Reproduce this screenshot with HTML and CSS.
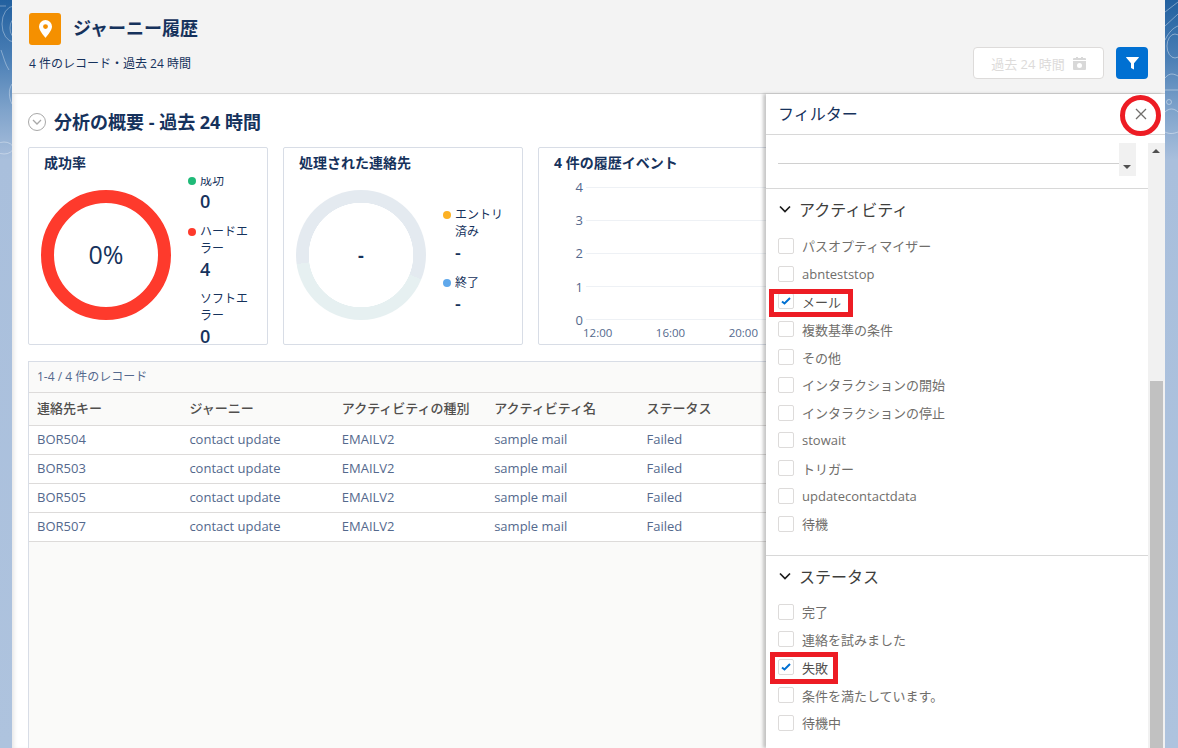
FILE: index.html
```html
<!DOCTYPE html>
<html lang="ja">
<head>
  <meta charset="UTF-8">
  <meta name="viewport" content="width=device-width, initial-scale=1.0">
  <title>ジャーニー履歴</title>
  <link rel="stylesheet" href="styles.css">
</head>
<body>
  <svg class="wall wall-left" width="12" height="170" viewBox="0 0 12 170" fill="none" stroke="#fff" stroke-opacity="0.35">
    <ellipse cx="14" cy="24" rx="12" ry="18"/>
    <ellipse cx="16" cy="28" rx="6" ry="10"/>
    <path d="M1 50c3 8 4 14 8 20M0 6h6M12 84c-4 6-3 14 0 20"/>
    <ellipse cx="4" cy="148" rx="9" ry="6"/>
  </svg>
  <svg class="wall wall-right" width="13" height="170" viewBox="0 0 13 170" fill="none" stroke="#fff" stroke-opacity="0.4">
    <path d="M0 12L13 2M0 26L13 14M0 40c4-8 8-12 13-14"/>
    <ellipse cx="10" cy="46" rx="8" ry="12"/>
    <path d="M0 78c5-6 9-4 13-2M0 90h13M0 112c4-4 9-4 13 0M0 132c4 2 8 2 13 0"/>
    <circle cx="4" cy="102" r="2.500"/>
  </svg>
  <div class="app">
    <header class="page-head">
      <div class="head-left">
        <div class="title-row">
          <span class="app-icon">
            <svg width="13" height="20" viewBox="0 0 16 22"><path fill="#fff" fill-rule="evenodd" d="M8 0a8 8 0 0 0-8 8c0 5 5.500 10.500 7.300 13.300a.8.800 0 0 0 1.400 0C10.500 18.500 16 13 16 8a8 8 0 0 0-8-8zm0 5a3 3 0 1 1 0 6 3 3 0 0 1 0-6z"/></svg>
          </span>
          <h1>ジャーニー履歴</h1>
        </div>
        <div class="subtitle">4 件のレコード・過去 24 時間</div>
      </div>
      <div class="head-actions">
        <button class="range-btn">過去 24 時間
          <svg width="13" height="13" viewBox="0 0 13 13"><path fill="#d8d8d8" fill-rule="evenodd" d="M0 4h13v8a1 1 0 0 1-1 1H1a1 1 0 0 1-1-1zm6.500 2a2.500 2.500 0 1 0 0 5 2.500 2.500 0 0 0 0-5zM1 1h2V0h2v1h3V0h2v1h2a1 1 0 0 1 1 1v1H0V2a1 1 0 0 1 1-1z"/></svg>
        </button>
        <button class="filter-btn">
          <svg width="13" height="13" viewBox="0 0 13 13"><path fill="#fff" d="M.4 0h12.200c.3 0 .5.400.3.600L8 6.200v6.300L5 11V6.200L.1.600C-.1.400.1 0 .4 0z"/></svg>
        </button>
      </div>
    </header>

    <div class="body">
      <main class="content">
        <div class="section-title">
          <span class="collapse-circle">
            <svg width="10" height="6" viewBox="0 0 10 6"><path fill="none" stroke="#a8a8a8" stroke-width="1.300" d="M1 1l4 4 4-4"/></svg>
          </span>
          <h2>分析の概要 - 過去 24 時間</h2>
        </div>

        <div class="cards">
          <section class="card">
            <h3>成功率</h3>
            <div class="card-body">
              <div class="donut donut-red"><span class="donut-pct">0%</span></div>
              <div class="legend legend-scroll">
                <div class="legend-item first-item">
                  <div class="legend-label"><i class="dot green"></i>成功</div>
                  <div class="legend-value">0</div>
                </div>
                <div class="legend-item">
                  <div class="legend-label"><i class="dot red"></i>ハードエラー</div>
                  <div class="legend-value">4</div>
                </div>
                <div class="legend-item">
                  <div class="legend-label">ソフトエラー</div>
                  <div class="legend-value">0</div>
                </div>
              </div>
            </div>
          </section>

          <section class="card">
            <h3>処理された連絡先</h3>
            <div class="card-body">
              <div class="donut donut-empty"><span class="donut-dash">-</span></div>
              <div class="legend legend-centered">
                <div class="legend-item">
                  <div class="legend-label"><i class="dot orange"></i>エントリ済み</div>
                  <div class="legend-value">-</div>
                </div>
                <div class="legend-item">
                  <div class="legend-label"><i class="dot blue"></i>終了</div>
                  <div class="legend-value">-</div>
                </div>
              </div>
            </div>
          </section>

          <section class="card card-chart">
            <h3>4 件の履歴イベント</h3>
            <div class="chart">
              <div class="chart-row"><span>4</span><i></i></div>
              <div class="chart-row"><span>3</span><i></i></div>
              <div class="chart-row"><span>2</span><i></i></div>
              <div class="chart-row"><span>1</span><i></i></div>
              <div class="chart-row"><span>0</span><i></i></div>
              <div class="chart-times"><span>12:00</span><span>16:00</span><span>20:00</span></div>
            </div>
          </section>
        </div>

        <div class="records">
          <div class="records-count">1-4 / 4 件のレコード</div>
          <table>
            <thead>
              <tr><th>連絡先キー</th><th>ジャーニー</th><th>アクティビティの種別</th><th>アクティビティ名</th><th>ステータス</th></tr>
            </thead>
            <tbody>
              <tr><td>BOR504</td><td>contact update</td><td>EMAILV2</td><td>sample mail</td><td>Failed</td></tr>
              <tr><td>BOR503</td><td>contact update</td><td>EMAILV2</td><td>sample mail</td><td>Failed</td></tr>
              <tr><td>BOR505</td><td>contact update</td><td>EMAILV2</td><td>sample mail</td><td>Failed</td></tr>
              <tr><td>BOR507</td><td>contact update</td><td>EMAILV2</td><td>sample mail</td><td>Failed</td></tr>
            </tbody>
          </table>
        </div>
      </main>

      <aside class="filter-panel">
        <div class="filter-head">
          <span class="filter-name">フィルター</span>
          <svg class="close-x" width="12" height="12" viewBox="0 0 12 12"><path stroke="#706e6b" stroke-width="1.300" d="M1 1l10 10M11 1L1 11"/></svg>
          <span class="close-ring"></span>
        </div>
        <div class="filter-scroll">
          <div class="filter-inner">
            <div class="picker">
              <div class="picker-line"></div>
              <div class="picker-spin"><i class="tri-down"></i></div>
            </div>

            <div class="group group-first">
              <div class="group-title">
                <svg width="12" height="8" viewBox="0 0 12 8"><path fill="none" stroke="#1b1b1b" stroke-width="1.700" d="M1 1.500l5 5 5-5"/></svg>
                アクティビティ
              </div>
              <label class="check"><i class="box"></i>パスオプティマイザー</label>
              <label class="check"><i class="box"></i>abnteststop</label>
              <label class="check on mark-mail"><i class="box"><svg width="10" height="8" viewBox="0 0 10 8"><path fill="none" stroke="#0070d2" stroke-width="2" d="M1 4.500l2.500 2L9 1"/></svg></i>メール</label>
              <label class="check"><i class="box"></i>複数基準の条件</label>
              <label class="check"><i class="box"></i>その他</label>
              <label class="check"><i class="box"></i>インタラクションの開始</label>
              <label class="check"><i class="box"></i>インタラクションの停止</label>
              <label class="check"><i class="box"></i>stowait</label>
              <label class="check"><i class="box"></i>トリガー</label>
              <label class="check"><i class="box"></i>updatecontactdata</label>
              <label class="check"><i class="box"></i>待機</label>
            </div>

            <div class="group">
              <div class="group-title">
                <svg width="12" height="8" viewBox="0 0 12 8"><path fill="none" stroke="#1b1b1b" stroke-width="1.700" d="M1 1.500l5 5 5-5"/></svg>
                ステータス
              </div>
              <label class="check"><i class="box"></i>完了</label>
              <label class="check"><i class="box"></i>連絡を試みました</label>
              <label class="check on mark-fail"><i class="box"><svg width="10" height="8" viewBox="0 0 10 8"><path fill="none" stroke="#0070d2" stroke-width="2" d="M1 4.500l2.500 2L9 1"/></svg></i>失敗</label>
              <label class="check"><i class="box"></i>条件を満たしています。</label>
              <label class="check"><i class="box"></i>待機中</label>
            </div>
          </div>
          <div class="scrollbar">
            <i class="tri-up"></i>
            <div class="scroll-thumb"></div>
          </div>
        </div>
      </aside>
    </div>
  </div>
</body>
</html>
```

FILE: styles.css
```css
html, body {
  margin: 0;
  height: 748px;
  overflow: hidden;
}
body {
  font-family: "Open Sans", "Noto Sans CJK JP", sans-serif;
  font-size: 13px;
  color: #16325c;
  background: linear-gradient(to bottom, #22609f 0, #4c80b6 60px, #7fa3cb 110px, #a9bfdc 160px, #aec3de 100%);
  position: relative;
}
h1, h2, h3 {
  margin: 0;
}
button {
  font-family: inherit;
}
.wall {
  position: absolute;
  top: 0;
}
.wall-left {
  left: 0;
}
.wall-right {
  right: 0;
}
.app {
  width: 1153px;
  height: 748px;
  margin-left: 12px;
  display: flex;
  flex-direction: column;
  background: #fff;
  position: relative;
}

/* header */
.page-head {
  height: 94px;
  flex: none;
  box-sizing: border-box;
  background: #f3f3f3;
  border-bottom: 1px solid #d8d8d8;
  padding: 13px 17px 0 17px;
  display: flex;
  justify-content: space-between;
}
.title-row {
  display: flex;
  align-items: center;
  gap: 12px;
}
.app-icon {
  width: 32px;
  height: 32px;
  border-radius: 3px;
  background: #f59000;
  display: flex;
  align-items: center;
  justify-content: center;
}
h1 {
  font-size: 18px;
  font-weight: 700;
  line-height: 22px;
  padding-bottom: 3px;
  color: #16325c;
}
.subtitle {
  margin-top: 9px;
  font-size: 12px;
  color: #16325c;
}
.head-actions {
  display: flex;
  gap: 12px;
  padding-top: 34px;
  align-items: flex-start;
}
.range-btn {
  width: 131px;
  height: 32px;
  background: #fff;
  border: 1px solid #dddbda;
  border-radius: 4px;
  color: #dddbda;
  font-size: 13px;
  display: flex;
  align-items: center;
  justify-content: center;
  gap: 8px;
  padding: 0;
}
.filter-btn {
  width: 32px;
  height: 32px;
  border: 0;
  border-radius: 4px;
  background: #0070d2;
  display: flex;
  align-items: center;
  justify-content: center;
  padding: 0;
}

/* main area */
.body {
  flex: 1;
  display: flex;
  min-height: 0;
  box-shadow: inset 4px 0 4px -2px rgba(0, 0, 0, 0.1);
}
.content {
  flex: 1;
  min-width: 0;
  overflow: hidden;
  padding: 0 0 0 16px;
  box-sizing: border-box;
}
.section-title {
  height: 51px;
  padding-top: 2px;
  display: flex;
  align-items: center;
  gap: 8px;
}
.collapse-circle {
  width: 16px;
  height: 16px;
  border: 1px solid #a8a8a8;
  border-radius: 50%;
  display: flex;
  align-items: center;
  justify-content: center;
}
h2 {
  font-size: 18px;
  font-weight: 700;
  line-height: 24px;
}
.cards {
  display: flex;
  gap: 15px;
  width: 760px;
}
.card {
  width: 240px;
  height: 198px;
  flex: none;
  box-sizing: border-box;
  border: 1px solid #d8dde6;
  border-radius: 2px;
  overflow: hidden;
  background: #fff;
}
.card-chart {
  width: 260px;
}
h3 {
  font-size: 14px;
  font-weight: 700;
  line-height: 18px;
  height: 23px;
  box-sizing: border-box;
  padding: 6px 0 0 15px;
  color: #16325c;
}
.card-body {
  display: flex;
}
.donut {
  width: 130px;
  height: 130px;
  border-radius: 50%;
  box-sizing: border-box;
  margin: 19px 0 0 12px;
  flex: none;
  display: flex;
  align-items: center;
  justify-content: center;
}
.donut-red {
  border: 13px solid #fe3a2c;
}
.donut-empty {
  background: radial-gradient(#fff 52px, transparent 52.500px), conic-gradient(#e4eaf0 0 112deg, #e6f0f1 112deg 262deg, #e4eaf0 262deg);
}
.donut-pct {
  font-size: 25px;
  font-weight: 500;
  padding-bottom: 2px;
}
.donut-dash {
  font-size: 18px;
  font-weight: 700;
}
.legend {
  margin-left: 17px;
  width: 60px;
}
.legend-scroll {
  margin-top: 6px;
  height: 168px;
  overflow: hidden;
}
.legend-centered {
  margin-top: 35px;
}
.first-item {
  margin-top: -5px;
}
.legend-item {
  padding-left: 12px;
  position: relative;
}
.legend-label {
  font-size: 12px;
  line-height: 17px;
  color: #16325c;
}
.legend-value {
  font-size: 18px;
  font-weight: 600;
  line-height: 22px;
  margin: 1px 0 10.500px;
  color: #16325c;
}
.dot {
  position: absolute;
  left: 0;
  top: 5px;
  width: 8px;
  height: 8px;
  border-radius: 50%;
}
.dot.green { background: #1fba78; }
.dot.red { background: #fe3a2c; }
.dot.orange { background: #fcb124; }
.dot.blue { background: #5fa8eb; }

/* history chart */
.chart {
  padding: 8px 0 0 0;
  color: #54698d;
}
.chart-row {
  height: 16px;
  margin-bottom: 17.200px;
  display: flex;
  align-items: center;
  font-size: 13px;
}
.chart-row span {
  width: 47px;
  text-align: right;
  padding-right: 3px;
  box-sizing: border-box;
}
.chart-row i {
  flex: 1;
  height: 1px;
  background: #eef1f5;
}
.chart-row:nth-child(5) {
  margin-bottom: -3px;
}
.chart-times {
  display: flex;
  gap: 43.500px;
  padding-left: 44px;
  font-size: 11.500px;
}

/* records table */
.records {
  margin-top: 16px;
  width: 760px;
  height: 400px;
  box-sizing: border-box;
  border: 1px solid #d8dde6;
  background: #fafaf9;
}
.records-count {
  height: 30px;
  line-height: 30px;
  padding-left: 8px;
  font-size: 12px;
  border-bottom: 1px solid #dddbda;
  color: #54698d;
}
table {
  border-collapse: collapse;
  table-layout: fixed;
  width: 760px;
}
th, td {
  width: 152.400px;
  padding: 0 0 2px 8px;
  text-align: left;
  border-bottom: 1px solid #dddbda;
  box-sizing: border-box;
  white-space: nowrap;
}
th {
  height: 32px;
  padding-bottom: 3px;
  font-size: 13px;
  font-weight: 500;
  color: #514f4d;
}
td {
  height: 29px;
  font-size: 13px;
  background: #fff;
  color: #54698d;
}

/* filter panel */
.filter-panel {
  width: 399px;
  flex: none;
  display: flex;
  flex-direction: column;
  background: #fff;
  box-shadow: -3px 0 3px rgba(0, 0, 0, 0.22);
  min-height: 0;
  position: relative;
}
.filter-head {
  height: 41px;
  flex: none;
  box-sizing: border-box;
  border-bottom: 1px solid #d8d8d8;
  display: flex;
  align-items: center;
  padding: 0 0 3px 12px;
  font-size: 16px;
  color: #16325c;
  position: relative;
}
.close-x {
  position: absolute;
  left: 369px;
  top: 14px;
}
.close-ring {
  position: absolute;
  left: 354px;
  top: 1px;
  width: 41px;
  height: 41px;
  box-sizing: border-box;
  border: 5px solid #ed1c24;
  border-radius: 50%;
}
.filter-scroll {
  flex: 1;
  display: flex;
  min-height: 0;
  overflow: hidden;
}
.filter-inner {
  flex: 1;
  min-width: 0;
}
.scrollbar {
  width: 17px;
  flex: none;
  margin-top: 8px;
  background: #f1f1f1;
  position: relative;
}
.tri-up {
  position: absolute;
  left: 4px;
  top: 6px;
  border: 4px solid transparent;
  border-top: 0;
  border-bottom: 4px solid #505050;
}
.scroll-thumb {
  position: absolute;
  top: 238px;
  left: 2px;
  right: 2px;
  bottom: 0;
  background: #c1c1c1;
}
.picker {
  height: 54px;
  box-sizing: border-box;
  border-bottom: 1px solid #d8d8d8;
  display: flex;
  align-items: flex-start;
  padding: 8px 12px 0 12px;
}
.picker-line {
  flex: 1;
  height: 20px;
  border-bottom: 1px solid #d0d0d0;
}
.picker-spin {
  width: 17px;
  height: 33px;
  background: #f1f1f1;
  position: relative;
}
.tri-down {
  position: absolute;
  left: 4px;
  bottom: 7px;
  border: 4px solid transparent;
  border-bottom: 0;
  border-top: 4px solid #505050;
}
.group {
  border-bottom: 1px solid #d8d8d8;
  padding: 0 12px 17px 12px;
}
.group:last-child {
  border-bottom: 0;
}
.group-title {
  height: 42px;
  box-sizing: border-box;
  padding-bottom: 2px;
  display: flex;
  align-items: center;
  gap: 8px;
  font-size: 16px;
  color: #3e3e3c;
}
.group-title svg {
  margin-left: 1px;
}
.group-first .group-title {
  margin-bottom: 1px;
}
.check {
  height: 27.800px;
  display: flex;
  align-items: center;
  gap: 8px;
  font-size: 13px;
  color: #706e6b;
  position: relative;
}
.box {
  width: 14px;
  height: 14px;
  border: 1px solid #dddbda;
  border-radius: 2px;
  background: #fff;
  display: flex;
  align-items: center;
  justify-content: center;
  flex: none;
}
.check.on {
  color: #514f4d;
}
.check.on::after {
  content: "";
  position: absolute;
  box-sizing: border-box;
  border: 5px solid #ed1c24;
}
.mark-mail::after {
  left: -9px;
  top: 1px;
  width: 84px;
  height: 28px;
}
.mark-fail::after {
  left: -8px;
  top: -1px;
  width: 68px;
  height: 32px;
}
```
